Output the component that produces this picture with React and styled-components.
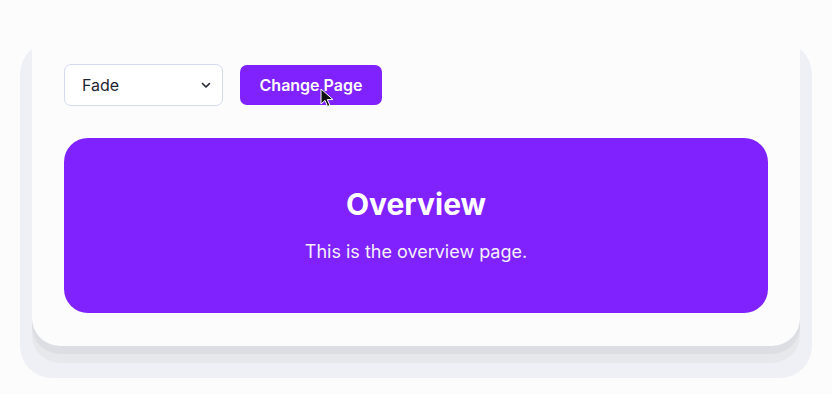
import React, { useState } from 'react';
import styled, { createGlobalStyle } from 'styled-components';

const GlobalStyle = createGlobalStyle`
  html, body {
    margin: 0;
    padding: 0;
    background: #fcfcfd;
    font-family: 'Inter', 'Liberation Sans', sans-serif;
  }
`;

const Stage = styled.div`
  padding: 42px 20px 16px 20px;
`;

const BackPanel = styled.div`
  background: #eef0f6;
  border-radius: 32px;
  padding: 0 12px 32px 12px;
`;

const Card = styled.section`
  background: #fcfcfd;
  border-radius: 0 0 28px 28px;
  padding: 22px 32px 33px 32px;
  box-shadow: 0 8px 0 #dddee3, 0 17px 0 #e7e8eb;
  display: flex;
  flex-direction: column;
  gap: 32px;
`;

const Toolbar = styled.div`
  display: flex;
  align-items: center;
  gap: 17px;
`;

const SelectWrap = styled.div`
  position: relative;
  width: 159px;
`;

const SelectButton = styled.button`
  display: flex;
  align-items: center;
  justify-content: space-between;
  width: 100%;
  height: 42px;
  padding: 0 10px 0 17px;
  border: 1px solid #d3dbee;
  border-radius: 7px;
  background: #ffffff;
  font-family: 'Inter', 'Liberation Sans', sans-serif;
  font-size: 16px;
  color: #1f2430;
  cursor: pointer;
`;

const Menu = styled.ul`
  position: absolute;
  top: 46px;
  left: 0;
  right: 0;
  margin: 0;
  padding: 4px 0;
  list-style: none;
  background: #ffffff;
  border: 1px solid #d3dbee;
  border-radius: 7px;
  z-index: 2;
`;

const MenuItem = styled.li`
  padding: 6px 17px;
  font-size: 15px;
  color: #1f2430;
  cursor: pointer;
  background: ${(p) => (p.$active ? '#f1ebff' : 'transparent')};
`;

const Button = styled.button`
  position: relative;
  width: 142px;
  height: 40px;
  border: none;
  border-radius: 7px;
  background: #7f22fd;
  color: #ffffff;
  font-family: 'Inter', 'Liberation Sans', sans-serif;
  font-size: 16px;
  font-weight: 600;
  cursor: pointer;
`;

const Cursor = styled.svg`
  position: absolute;
  left: 80px;
  top: 23px;
`;

const Page = styled.div`
  background: #7f22fe;
  border-radius: 24px;
  padding: 48px 32px 47px 32px;
  display: flex;
  flex-direction: column;
  align-items: center;
  gap: 16px;
  color: #ffffff;
`;

const Title = styled.h1`
  margin: 0;
  font-size: 30px;
  line-height: 36px;
  font-weight: 700;
`;

const Text = styled.p`
  margin: 0;
  font-size: 18px;
  line-height: 28px;
  color: #f6efff;
`;

const effects = ['Fade', 'Slide', 'Scale'];

const pages = [
  { title: 'Overview', text: 'This is the overview page.' },
  { title: 'Details', text: 'This is the details page.' },
];

export default function App() {
  const [effect, setEffect] = useState('Fade');
  const [open, setOpen] = useState(false);
  const [index, setIndex] = useState(0);
  const page = pages[index];

  return (
    <>
      <GlobalStyle />
      <Stage>
        <BackPanel>
          <Card>
            <Toolbar>
              <SelectWrap>
                <SelectButton onClick={() => setOpen(!open)}>
                  <span>{effect}</span>
                  <svg width="12" height="12" viewBox="0 0 12 12" fill="none">
                    <path d="M2.5 4.5 6 8l3.5-3.5" stroke="#1f2430" strokeWidth="1.6" strokeLinecap="round" strokeLinejoin="round" />
                  </svg>
                </SelectButton>
                {open && (
                  <Menu>
                    {effects.map((name) => (
                      <MenuItem
                        key={name}
                        $active={name === effect}
                        onClick={() => {
                          setEffect(name);
                          setOpen(false);
                        }}
                      >
                        {name}
                      </MenuItem>
                    ))}
                  </Menu>
                )}
              </SelectWrap>
              <Button onClick={() => setIndex((index + 1) % pages.length)}>
                Change Page
                <Cursor width="14" height="20" viewBox="0 0 14 20">
                  <path d="M1 1v15l4-3.6 2.6 6 2.3-1-2.6-5.8H13z" fill="#111" stroke="#fff" strokeWidth="1" strokeLinejoin="round" />
                </Cursor>
              </Button>
            </Toolbar>
            <Page>
              <Title>{page.title}</Title>
              <Text>{page.text}</Text>
            </Page>
          </Card>
        </BackPanel>
      </Stage>
    </>
  );
}
